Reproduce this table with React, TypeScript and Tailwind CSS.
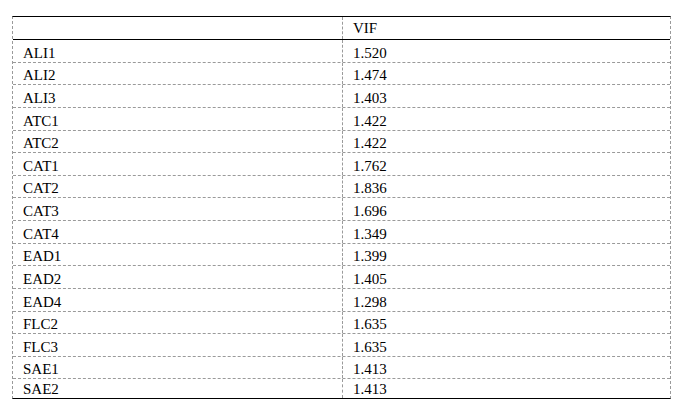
const rows: [string, string][] = [
  ["ALI1", "1.520"],
  ["ALI2", "1.474"],
  ["ALI3", "1.403"],
  ["ATC1", "1.422"],
  ["ATC2", "1.422"],
  ["CAT1", "1.762"],
  ["CAT2", "1.836"],
  ["CAT3", "1.696"],
  ["CAT4", "1.349"],
  ["EAD1", "1.399"],
  ["EAD2", "1.405"],
  ["EAD4", "1.298"],
  ["FLC2", "1.635"],
  ["FLC3", "1.635"],
  ["SAE1", "1.413"],
  ["SAE2", "1.413"],
];

export default function App() {
  return (
    <div className="w-[677px] h-[409px] bg-white pt-[16px] pl-[12px] font-[family-name:'Liberation_Serif','Times_New_Roman',serif] text-[15px] text-black">
      <div className="w-[659px] border-t border-b border-t-black border-b-black border-x border-x-[#9a9a9a] border-dashed [border-top-style:solid] [border-bottom-style:solid]">
        {/* header */}
        <div className="grid grid-cols-[329px_1fr] h-[23px] border-b border-black">
          <div className="flex items-end pb-[3px] pl-[10px] leading-[15px]"></div>
          <div className="flex items-end pb-[3px] pl-[10px] leading-[15px] border-l border-dashed border-[#9a9a9a]">
            VIF
          </div>
        </div>
        {rows.map(([name, vif], i) => {
          const last = i === rows.length - 1;
          return (
            <div
              key={name}
              className={
                last
                  ? "grid grid-cols-[329px_1fr] h-[18.5px]"
                  : "grid grid-cols-[329px_1fr] h-[22.63px] border-b border-dashed border-[#9a9a9a]"
              }
            >
              <div className="flex items-end pb-[1px] pl-[10px] leading-[15px]">{name}</div>
              <div className="flex items-end pb-[1px] pl-[10px] leading-[15px] border-l border-dashed border-[#9a9a9a]">
                {vif}
              </div>
            </div>
          );
        })}
      </div>
    </div>
  );
}
